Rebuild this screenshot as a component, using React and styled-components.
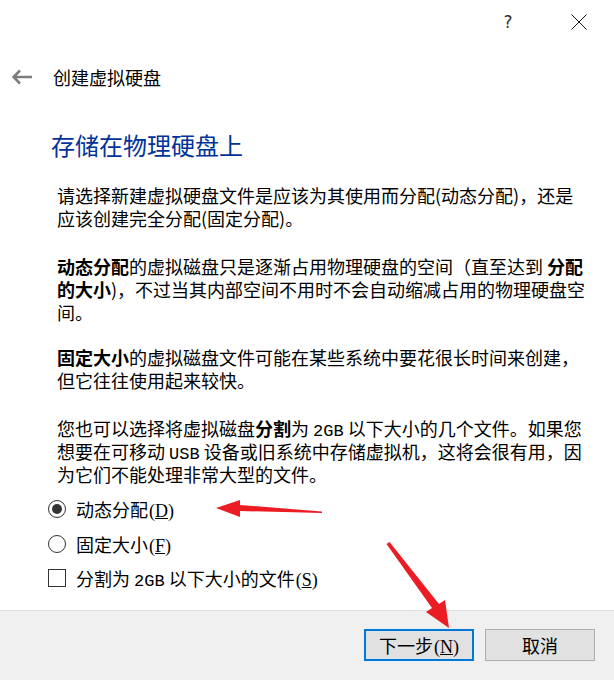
import React from 'react';
import styled, { createGlobalStyle } from 'styled-components';

const GlobalStyle = createGlobalStyle`
    html, body {
        margin: 0;
        padding: 0;
        background: #ffffff;
    }
`;

const cjk = `"Noto Sans CJK SC", "Noto Sans", sans-serif`;

const Window = styled.div`
    position: relative;
    width: 614px;
    height: 680px;
    display: flex;
    flex-direction: column;
    background: #ffffff;
    overflow: hidden;
    font-family: ${cjk};
    color: #000;
`;

const TitleBar = styled.div`
    height: 44px;
    display: flex;
    justify-content: flex-end;
    align-items: center;
    gap: 41px;
    padding-right: 20px;
`;

const TitleButton = styled.div`
    width: 30px;
    height: 30px;
    display: flex;
    align-items: center;
    justify-content: center;
    font-family: "DejaVu Sans", sans-serif;
    font-size: 17px;
    color: #333;
`;

const Header = styled.div`
    height: 66px;
    display: flex;
    align-items: center;
    gap: 21px;
    padding-left: 12px;
    font-size: 18px;
`;

const Content = styled.div`
    padding-left: 57px;
    display: flex;
    flex-direction: column;
`;

const Heading = styled.h1`
    margin: 19px 0 0 -6px;
    font-family: ${cjk};
    font-weight: 400;
    font-size: 24px;
    line-height: 32px;
    color: #003399;
`;

const Paragraph = styled.p`
    margin: ${p => p.$gap}px 0 0;
    font-size: 18px;
    line-height: 23px;
    white-space: nowrap;

    b {
        font-weight: 700;
    }
`;

// latin runs drawn in a fixed-width face, as in the original dialog
const Latin = styled.span`
    font-family: "Liberation Mono", monospace;
    font-size: 17px;
    line-height: 1;
`;

// access-key hints like (D)
const Mnemonic = styled.span`
    font-family: "Liberation Serif", serif;
    font-size: 18px;
    line-height: 1;
    margin-left: 1px;
`;

const Options = styled.div`
    margin: 6px 0 0 -9px;
    display: flex;
    flex-direction: column;
`;

const Option = styled.label`
    height: 34.5px;
    display: flex;
    align-items: center;
    gap: 10px;
    font-size: 18px;
`;

const OptionText = styled.span`
    white-space: nowrap;
`;

const Radio = styled.span`
    width: 18px;
    height: 18px;
    box-sizing: border-box;
    border: 1px solid #333;
    border-radius: 50%;
    display: flex;
    align-items: center;
    justify-content: center;

    &::after {
        content: '';
        width: 10px;
        height: 10px;
        border-radius: 50%;
        background: ${p => p.$checked ? '#333' : 'transparent'};
    }
`;

const Checkbox = styled.span`
    width: 18px;
    height: 18px;
    box-sizing: border-box;
    border: 1px solid #333;
`;

const Footer = styled.div`
    margin-top: auto;
    height: 70px;
    box-sizing: border-box;
    background: #f0f0f0;
    border-top: 1px solid #dfdfdf;
    display: flex;
    justify-content: flex-end;
    align-items: flex-start;
    gap: 11px;
    padding: 18px 19px 0 0;
`;

const Button = styled.button`
    width: 110px;
    height: 32px;
    box-sizing: border-box;
    background: #e1e1e1;
    border: ${p => p.$primary ? '2px solid #0078d7' : '1px solid #adadad'};
    font-family: ${cjk};
    font-size: 18px;
    color: #000;
    padding: 0;
`;

const Overlay = styled.svg`
    position: absolute;
    left: 0;
    top: 0;
    pointer-events: none;
`;

const Key = ({ k }) => <Mnemonic>(<u>{k}</u>)</Mnemonic>;

export default function App() {
    return (
        <Window>
            <GlobalStyle />
            <TitleBar>
                <TitleButton>?</TitleButton>
                <TitleButton>
                    <svg width="16" height="16" viewBox="0 0 16 16">
                        <path d="M0.5 0.5 L15.5 15.5 M15.5 0.5 L0.5 15.5" stroke="#111" strokeWidth="1" fill="none" />
                    </svg>
                </TitleButton>
            </TitleBar>
            <Header>
                <svg width="20" height="16" viewBox="0 0 20 16">
                    <path d="M1.5 8 H20 M8 1.5 L1.5 8 L8 14.5" stroke="#7d7d7d" strokeWidth="2.6" fill="none" />
                </svg>
                <span>创建虚拟硬盘</span>
            </Header>
            <Content>
                <Heading>存储在物理硬盘上</Heading>
                <Paragraph $gap={23}>
                    请选择新建虚拟硬盘文件是应该为其使用而分配(动态分配)，还是<br />
                    应该创建完全分配(固定分配)。
                </Paragraph>
                <Paragraph $gap={25}>
                    <b>动态分配</b>的虚拟磁盘只是逐渐占用物理硬盘的空间（直至达到 <b>分配</b><br />
                    <b>的大小</b>)，不过当其内部空间不用时不会自动缩减占用的物理硬盘空<br />
                    间。
                </Paragraph>
                <Paragraph $gap={22}>
                    <b>固定大小</b>的虚拟磁盘文件可能在某些系统中要花很长时间来创建，<br />
                    但它往往使用起来较快。
                </Paragraph>
                <Paragraph $gap={25}>
                    您也可以选择将虚拟磁盘<b>分割</b>为 <Latin>2GB</Latin> 以下大小的几个文件。如果您<br />
                    想要在可移动 <Latin>USB</Latin> 设备或旧系统中存储虚拟机，这将会很有用，因<br />
                    为它们不能处理非常大型的文件。
                </Paragraph>
                <Options>
                    <Option><Radio $checked /><OptionText>动态分配<Key k="D" /></OptionText></Option>
                    <Option><Radio /><OptionText>固定大小<Key k="F" /></OptionText></Option>
                    <Option><Checkbox /><OptionText>分割为 <Latin>2GB</Latin> 以下大小的文件<Key k="S" /></OptionText></Option>
                </Options>
            </Content>
            <Footer>
                <Button $primary>下一步<Key k="N" /></Button>
                <Button>取消</Button>
            </Footer>
            <Overlay width="614" height="680" viewBox="0 0 614 680">
                <path d="M322 511.5 L240 505 L240 500 L216 508 L240 517 L240 511 L322 513 Z" fill="#ec1c24" />
                <path d="M386.5 544 L432 608 L426 612 L449 628 L445 600 L439 604 L389.5 542 Z" fill="#ec1c24" />
            </Overlay>
        </Window>
    );
}
